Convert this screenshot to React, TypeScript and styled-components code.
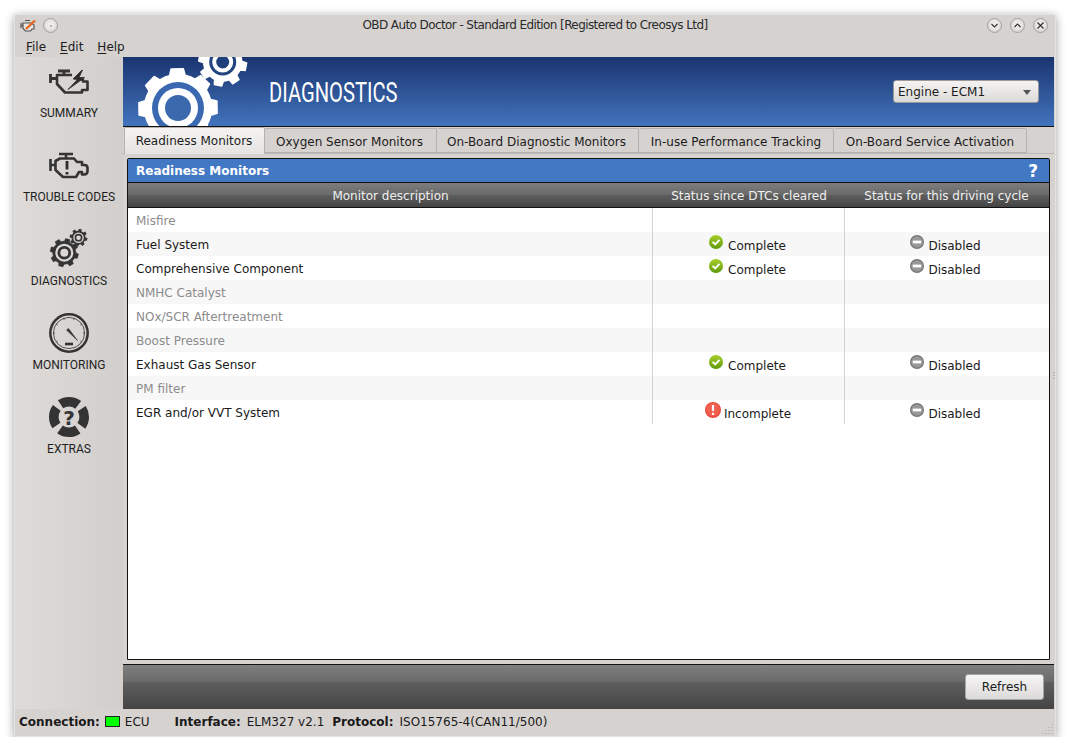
import React from "react";
import styled, { createGlobalStyle } from "styled-components";

const Global = createGlobalStyle`
  html, body { margin: 0; padding: 0; background: #ffffff; }
  body { font-family: "DejaVu Sans", sans-serif; font-size: 12px; color: #1a1a1a; }
  #root { padding: 14px 0 0 14px; }
  * { box-sizing: border-box; }
`;

const Window = styled.div`
  width: 1042px; height: 723px; display: flex; flex-direction: column;
  background: #d6d2d0; border: 1px solid #e4e2e0; border-radius: 3px 3px 2px 2px;
  box-shadow: 0 2px 10px rgba(0,0,0,.38);
`;
const TitleBar = styled.div`
  height: 21px; flex: none; display: flex; align-items: center; position: relative; padding: 0 7px 0 5px;
`;
const TitleText = styled.div`
  position: absolute; left: 0; right: 0; top: 3px; text-align: center; font-size: 12px; letter-spacing: -0.59px; color: #2a2a2a;
`;
const RoundBtn = styled.div<{ $ml?: number }>`
  width: 15px; height: 15px; border-radius: 50%; margin-left: ${p => p.$ml ?? 0}px; flex: none;
  background: radial-gradient(circle at 50% 45%, #f4f3f2 0%, #e6e4e3 50%, #bdbab8 100%); border: 1px solid #a5a2a0;
  display: flex; align-items: center; justify-content: center;
`;
const Spacer = styled.div`flex: 1;`;
const MenuBar = styled.div`
  height: 21px; flex: none; display: flex; align-items: center; padding-left: 11px; gap: 14px;
`;
const MenuItem = styled.span<{ $ml?: number }>`
  font-size: 12px; color: #1c1c1c; padding-top: 1px; margin-left: ${p => p.$ml ?? 0}px;
  u { text-underline-offset: 2px; }
`;
const Body = styled.div`flex: 1; display: flex; min-height: 0;`;
const Sidebar = styled.nav`
  width: 108px; flex: none; display: flex; flex-direction: column; gap: 24px; padding-top: 4px;
  background: linear-gradient(90deg, #dedbd8, #d2cecb);
`;
const NavItem = styled.div`
  display: flex; flex-direction: column; align-items: center; gap: 4px;
`;
const NavIcon = styled.div`
  height: 40px; display: flex; align-items: center; justify-content: center; width: 100%;
`;
const NavLabel = styled.div`
  font-family: Roboto, sans-serif; font-size: 12px; line-height: 16px; color: #1f1f1f; white-space: nowrap;
`;
const Main = styled.div`
  flex: 1; display: flex; flex-direction: column; min-width: 0; margin-right: 1px; position: relative;
`;
const Header = styled.header`
  height: 70px; flex: none; display: flex; align-items: center; position: relative; overflow: hidden;
  background: linear-gradient(#1a3470, #4274bd); border-bottom: 1px solid #111;
`;
const HeaderGears = styled.svg`
  position: absolute; left: 0; top: 0;
`;
const HeaderTitle = styled.h1`
  margin: 0 0 0 146px; font-family: Roboto, sans-serif; font-weight: 400; font-size: 28.5px; color: #fff;
  transform: scaleX(.708); transform-origin: left center; white-space: nowrap; padding-top: 1px;
`;
const Select = styled.div`
  position: absolute; left: 770px; top: 23px; width: 146px; height: 23px;
  background: linear-gradient(#f4f3f2, #dddbd9); border: 1px solid #9b9a99; border-radius: 3px;
  display: flex; align-items: center; justify-content: space-between; padding: 0 7px 0 4px; font-size: 12px; color: #1c1c1c;
`;
const Caret = styled.span`
  width: 0; height: 0; border-left: 4px solid transparent; border-right: 4px solid transparent; border-top: 5px solid #555; margin-top: 1px;
`;
const TabBar = styled.div`
  height: 27px; flex: none; display: flex; align-items: flex-end; padding-left: 1px; border-bottom: 1px solid #bdbab8;
`;
const Tab = styled.div<{ $active?: boolean; $w: number; $pr?: number }>`
  width: ${p => p.$w}px; height: ${p => (p.$active ? 27 : 25)}px; flex: none; text-align: center;
  padding-right: ${p => p.$pr ?? 0}px;
  margin-bottom: ${p => (p.$active ? -1 : 0)}px;
  background: ${p => (p.$active ? "linear-gradient(#f4f3f2, #e6e4e3)" : "#d6d2d0")};
  border: 1px solid #b4b1af; border-bottom: ${p => (p.$active ? "none" : "1px solid #b4b1af")}; border-left-width: ${p => (p.$active ? 1 : 0)}px;
  border-radius: 2px 2px 0 0; line-height: ${p => (p.$active ? 27 : 26)}px; font-size: 12px; color: #1c1c1c; white-space: nowrap;
`;
const Pane = styled.div`
  flex: 1; display: flex; padding: 4px; min-height: 0;
`;
const Panel = styled.section`
  flex: 1; background: #fff; border: 1px solid #111; border-radius: 2px 2px 0 0; display: flex; flex-direction: column; width: 923px;
`;
const PanelTitle = styled.div`
  height: 24px; flex: none; background: #4378c5; color: #fff; font-weight: 700; font-size: 12px;
  display: flex; align-items: center; justify-content: space-between; padding: 0 11px 0 8px; border-bottom: 1px solid #111;
`;
const Help = styled.span`font-size: 17px; font-weight: 700; line-height: 20px;`;
const Row = styled.div`
  display: grid; grid-template-columns: 524px 192px 1fr; grid-auto-rows: 24px;
`;
const HeadRow = styled(Row)`
  height: 25px; flex: none; border-bottom: 1px solid #111;
  background: linear-gradient(#7d7d7d 0%, #6a6a6a 48%, #5f5f5f 48%, #444 100%);
`;
const HeadCell = styled.div<{ $pl?: number }>`
  color: #f0f0f0; text-align: center; line-height: 27px; font-size: 12px; white-space: nowrap; padding-left: ${p => p.$pl ?? 2}px;
`;
const DataRow = styled(Row) <{ $alt?: boolean }>`
  height: 24px; flex: none; background: ${p => (p.$alt ? "#f7f7f7" : "#fff")};
`;
const NameCell = styled.div<{ $muted?: boolean }>`
  padding-left: 8px; line-height: 26px; font-size: 12px; color: ${p => (p.$muted ? "#8c8c8c" : "#1a1a1a")};
`;
const StatusCell = styled.div<{ $gap?: number; $pr?: number }>`
  border-left: 1px solid #d2d2d2; display: flex; justify-content: center; align-items: flex-start;
  gap: ${p => p.$gap ?? 5}px; padding-right: ${p => p.$pr ?? 2}px;
  font-size: 12px; line-height: 28px; color: #1a1a1a;
  svg { margin-top: 3px; flex: none; }
`;
const Footer = styled.div`
  height: 45px; flex: none; border-top: 1px solid #111; display: flex; align-items: center; justify-content: flex-end; padding: 0 10px 0 0;
  background: linear-gradient(#7f7f7f 0%, #6a6a6a 38%, #5f5f5f 38%, #444 100%);
`;
const Refresh = styled.button`
  width: 79px; height: 26px; background: linear-gradient(#f6f5f5, #dcdad9); border: 1px solid #a8a6a5; border-radius: 3px;
  font-family: "DejaVu Sans", sans-serif; font-size: 12px; color: #1c1c1c; padding: 0;
`;
const StatusBar = styled.footer`
  height: 27px; flex: none; display: flex; align-items: center; padding: 0 0 2px 4px; font-size: 12px; position: relative;
`;
const StatusKey = styled.b<{ $ml?: number; $mr?: number }>`font-weight: 700; margin-left: ${p => p.$ml ?? 0}px; margin-right: ${p => p.$mr ?? 6}px;`;
const Led = styled.span`
  width: 15px; height: 11px; background: #00ff00; border: 1px solid #222; margin-right: 5px; margin-left: 1px;
`;
const Grip = styled.svg`position: absolute; right: 1px; bottom: 1px;`;
const Handle = styled.svg`position: absolute; right: -1px; top: 315px;`;

function gearPath(cx: number, cy: number, ro: number, rr: number, teeth: number, rot = 0) {
  const pts: string[] = [];
  const step = (Math.PI * 2) / teeth;
  for (let i = 0; i < teeth; i++) {
    const a = i * step + rot;
    const seq: [number, number][] = [
      [rr, a - step * 0.5], [rr, a - step * 0.3], [ro, a - step * 0.2], [ro, a + step * 0.2], [rr, a + step * 0.3],
    ];
    for (const [r, t] of seq) pts.push(`${(cx + r * Math.cos(t)).toFixed(2)} ${(cy + r * Math.sin(t)).toFixed(2)}`);
  }
  return "M" + pts.join("L") + "Z";
}
function circ(cx: number, cy: number, r: number) {
  return `M${cx - r} ${cy}a${r} ${r} 0 1 0 ${2 * r} 0a${r} ${r} 0 1 0 ${-2 * r} 0Z`;
}

const EngineBody = ({ d }: { d: string }) => (
  <path d={d} fill="none" stroke="#343434" strokeWidth="2.6" strokeLinejoin="round" strokeLinecap="butt" />
);

const SummaryIcon = () => (
  <svg width="41" height="27" viewBox="0 0 41 27">
    <path d="M9 3H21M15 3V7M1.5 6V15M1.5 10.5H7" fill="none" stroke="#343434" strokeWidth="2.8" />
    <EngineBody d="M23 7H8V16L16 24.5H33V22H38.5V13.5H34V11.5H31" />
    <path d="M33 2L24 11L28.5 11.5L19 21.5L35.5 9.5L30 9.5L33.5 2Z" fill="#2c2c2c" stroke="#2c2c2c" strokeWidth=".8" />
  </svg>
);
const TroubleIcon = () => (
  <svg width="41" height="27" viewBox="0 0 41 27">
    <path d="M10 2H24M17 2V6M1.5 7V19M1.5 13H6" fill="none" stroke="#343434" strokeWidth="2.6" />
    <EngineBody d="M11 6.5H25L28 10H33V13H35.5C37.5 13 38.5 14.5 38.5 16V19C38.5 21.5 37 22.5 35 22.5H33V20H30L27 25H14L6.5 18V9Z" />
    <path d="M18 9V17.5M18 20V22.5" fill="none" stroke="#2c2c2c" strokeWidth="2.8" />
  </svg>
);
const DiagIcon = () => (
  <svg width="41" height="40" viewBox="0 0 41 40">
    <path fillRule="evenodd" fill="#343434" stroke="#343434" strokeWidth=".6" strokeLinejoin="round"
      d={gearPath(15.3, 23.7, 14.2, 11.5, 8, 0.25)} />
    <path fillRule="evenodd" fill="#d9d6d3" d={circ(15.3, 23.7, 9) + circ(15.3, 23.7, 6.8)} />
    <circle cx="15.3" cy="23.7" r="4" fill="#d9d6d3" />
    <path fill="#343434" d={gearPath(29.5, 8.7, 9, 7, 8, 0.2)} />
    <path fillRule="evenodd" fill="#d9d6d3" d={circ(29.5, 8.7, 5.3) + circ(29.5, 8.7, 3.9)} />
    <circle cx="29.5" cy="8.7" r="2.3" fill="#d9d6d3" />
  </svg>
);
const MonitorIcon = () => {
  const ticks = [-215, -180, -145, -110, -70, -35, 0, 35].map(a => {
    const t = (a * Math.PI) / 180;
    return `M${(20 + 14 * Math.cos(t)).toFixed(1)} ${(20 + 14 * Math.sin(t)).toFixed(1)}L${(20 + 16 * Math.cos(t)).toFixed(1)} ${(20 + 16 * Math.sin(t)).toFixed(1)}`;
  }).join("");
  return (
    <svg width="40" height="40" viewBox="0 0 40 40">
      <circle cx="20" cy="20" r="18.7" fill="none" stroke="#343434" strokeWidth="2.5" />
      <circle cx="20" cy="20" r="15.6" fill="none" stroke="#555" strokeWidth="1" />
      <path d={ticks} stroke="#444" strokeWidth="1" />
      <path d="M17.5 17L19.5 15.5L28.5 27.5Z" fill="#343434" stroke="#343434" strokeWidth=".6" />
      <path d="M16 31H24" stroke="#343434" strokeWidth="2.6" />
    </svg>
  );
};
const ExtrasIcon = () => (
  <svg width="40" height="40" viewBox="0 0 40 40">
    <circle cx="20" cy="20" r="15.2" fill="none" stroke="#343434" strokeWidth="9.6" strokeDasharray="18.8 5.08" strokeDashoffset="9.4" />
    <text x="20" y="27.5" textAnchor="middle" fontFamily="'DejaVu Sans', sans-serif" fontWeight="700" fontSize="20" fill="#343434">?</text>
  </svg>
);

const AppIcon = () => (
  <svg width="16" height="13" viewBox="0 0 16 13">
    <path d="M1 4V9M1 6.5H3M5 1.5H10M3 4H11L14 6V10H12L10.5 12H5.5L3 9.5Z" fill="#e9e7e5" stroke="#555" strokeWidth="1.2" />
    <path d="M6 10L15 1.5" stroke="#e8641c" strokeWidth="2.4" />
  </svg>
);
const Chev = ({ d }: { d: string }) => (
  <svg width="9" height="9" viewBox="0 0 9 9"><path d={d} fill="none" stroke="#333" strokeWidth="1.2" /></svg>
);

const CheckIcon = () => (
  <svg width="14" height="14" viewBox="0 0 14 14">
    <defs><linearGradient id="gg" x1="0" y1="0" x2="0" y2="1"><stop offset="0" stopColor="#a8cf2e" /><stop offset="1" stopColor="#5f9a06" /></linearGradient></defs>
    <circle cx="7" cy="7" r="7" fill="url(#gg)" />
    <path d="M3.6 6.9L6.2 9.4L10.5 4.9" fill="none" stroke="#fff" strokeWidth="2" />
  </svg>
);
const MinusIcon = () => (
  <svg width="14" height="14" viewBox="0 0 14 14">
    <circle cx="7" cy="7" r="7" fill="#757575" />
    <circle cx="7" cy="7" r="5.8" fill="#989898" />
    <rect x="2.8" y="5.6" width="8.4" height="2.8" fill="#fff" />
  </svg>
);
const AlertIcon = () => (
  <svg width="16" height="16" viewBox="0 0 16 16" style={{ marginTop: 2 }}>
    <circle cx="8" cy="8" r="8" fill="#e8493a" />
    <circle cx="8" cy="7.6" r="6.8" fill="#f0604e" />
    <path d="M8 3V9M8 10.8V13" stroke="#fff" strokeWidth="2.2" />
  </svg>
);

type St = "c" | "i" | undefined;
const rows: { name: string; st?: St; dis?: boolean }[] = [
  { name: "Misfire" },
  { name: "Fuel System", st: "c", dis: true },
  { name: "Comprehensive Component", st: "c", dis: true },
  { name: "NMHC Catalyst" },
  { name: "NOx/SCR Aftertreatment" },
  { name: "Boost Pressure" },
  { name: "Exhaust Gas Sensor", st: "c", dis: true },
  { name: "PM filter" },
  { name: "EGR and/or VVT System", st: "i", dis: true },
];
const tabs: [string, number, number][] = [
  ["Oxygen Sensor Monitors", 172, 2],
  ["On-Board Diagnostic Monitors", 202, 2],
  ["In-use Performance Tracking", 195, 0],
  ["On-Board Service Activation", 193, 0],
];

export default function App() {
  return (
    <>
      <Global />
      <Window>
        <TitleBar>
          <AppIcon />
          <RoundBtn $ml={7}><svg width="2" height="2"><circle cx="1" cy="1" r=".8" fill="#666" /></svg></RoundBtn>
          <TitleText>OBD Auto Doctor - Standard Edition [Registered to Creosys Ltd]</TitleText>
          <Spacer />
          <RoundBtn><Chev d="M1.5 3L4.5 6L7.5 3" /></RoundBtn>
          <RoundBtn $ml={8}><Chev d="M1.5 6L4.5 3L7.5 6" /></RoundBtn>
          <RoundBtn $ml={8}><Chev d="M1.5 1.5L7.5 7.5M7.5 1.5L1.5 7.5" /></RoundBtn>
        </TitleBar>
        <MenuBar>
          <MenuItem><u>F</u>ile</MenuItem>
          <MenuItem><u>E</u>dit</MenuItem>
          <MenuItem $ml={0}><u>H</u>elp</MenuItem>
        </MenuBar>
        <Body>
          <Sidebar>
            <NavItem><NavIcon><SummaryIcon /></NavIcon><NavLabel>SUMMARY</NavLabel></NavItem>
            <NavItem><NavIcon><TroubleIcon /></NavIcon><NavLabel>TROUBLE CODES</NavLabel></NavItem>
            <NavItem><NavIcon><DiagIcon /></NavIcon><NavLabel>DIAGNOSTICS</NavLabel></NavItem>
            <NavItem><NavIcon><MonitorIcon /></NavIcon><NavLabel>MONITORING</NavLabel></NavItem>
            <NavItem><NavIcon><ExtrasIcon /></NavIcon><NavLabel>EXTRAS</NavLabel></NavItem>
          </Sidebar>
          <Main>
            <Header>
              <HeaderGears width="140" height="69" viewBox="0 0 140 69">
                <path fillRule="evenodd" fill="#fff" stroke="#fff" strokeWidth="1.5" strokeLinejoin="round"
                  d={gearPath(55, 51, 39.5, 33.5, 8, -0.02)} />
                <path fill="#3a69b1" d={circ(55, 51, 26)} />
                <path fill="#fff" d={circ(55, 51, 20)} />
                <path fill="#3a69ae" d={circ(55, 51, 13)} />
                <path fill="#fff" stroke="#fff" strokeWidth="1.5" strokeLinejoin="round" d={gearPath(99.7, 5, 24, 19, 8, 0.2)} />
                <path fill="#23447f" d={circ(99.7, 5, 13.5)} />
                <path fill="#fff" d={circ(99.7, 5, 10.5)} />
                <path fill="#20407b" d={circ(99.7, 5, 6.5)} />
              </HeaderGears>
              <HeaderTitle>DIAGNOSTICS</HeaderTitle>
              <Select>Engine - ECM1<Caret /></Select>
            </Header>
            <TabBar>
              <Tab $active $w={141} $pr={1}>Readiness Monitors</Tab>
              {tabs.map(([t, w, pr]) => <Tab key={t} $w={w} $pr={pr}>{t}</Tab>)}
            </TabBar>
            <Pane>
              <Panel>
                <PanelTitle>Readiness Monitors<Help>?</Help></PanelTitle>
                <HeadRow>
                  <HeadCell $pl={1}>Monitor description</HeadCell>
                  <HeadCell>Status since DTCs cleared</HeadCell>
                  <HeadCell $pl={0}>Status for this driving cycle</HeadCell>
                </HeadRow>
                {rows.map((r, i) => (
                  <DataRow key={r.name} $alt={i % 2 === 1}>
                    <NameCell $muted={!r.st}>{r.name}</NameCell>
                    <StatusCell $gap={r.st === "i" ? 3 : 5} $pr={r.st === "i" ? 1 : 2}>
                      {r.st === "c" && <><CheckIcon />Complete</>}
                      {r.st === "i" && <><AlertIcon />Incomplete</>}
                    </StatusCell>
                    <StatusCell $gap={4} $pr={3}>
                      {r.dis && <><MinusIcon />Disabled</>}
                    </StatusCell>
                  </DataRow>
                ))}
              </Panel>
            </Pane>
            <Footer><Refresh>Refresh</Refresh></Footer>
            <Handle width="2" height="7" viewBox="0 0 2 7">
              <path d="M1 0v1M1 3v1M1 6v1" stroke="#8f8c8a" strokeWidth="1" />
            </Handle>
          </Main>
        </Body>
        <StatusBar>
          <StatusKey $mr={4}>Connection:</StatusKey><Led />ECU
          <StatusKey $ml={25}>Interface:</StatusKey>ELM327 v2.1
          <StatusKey $ml={8}>Protocol:</StatusKey>ISO15765-4(CAN11/500)
          <Grip width="12" height="12" viewBox="0 0 12 12">
            <path d="M10 1v1M7 4v1M10 4v1M4 7v1M7 7v1M10 7v1M1 10v1M4 10v1M7 10v1M10 10v1" stroke="#aaa7a5" strokeWidth="1" />
          </Grip>
        </StatusBar>
      </Window>
    </>
  );
}
